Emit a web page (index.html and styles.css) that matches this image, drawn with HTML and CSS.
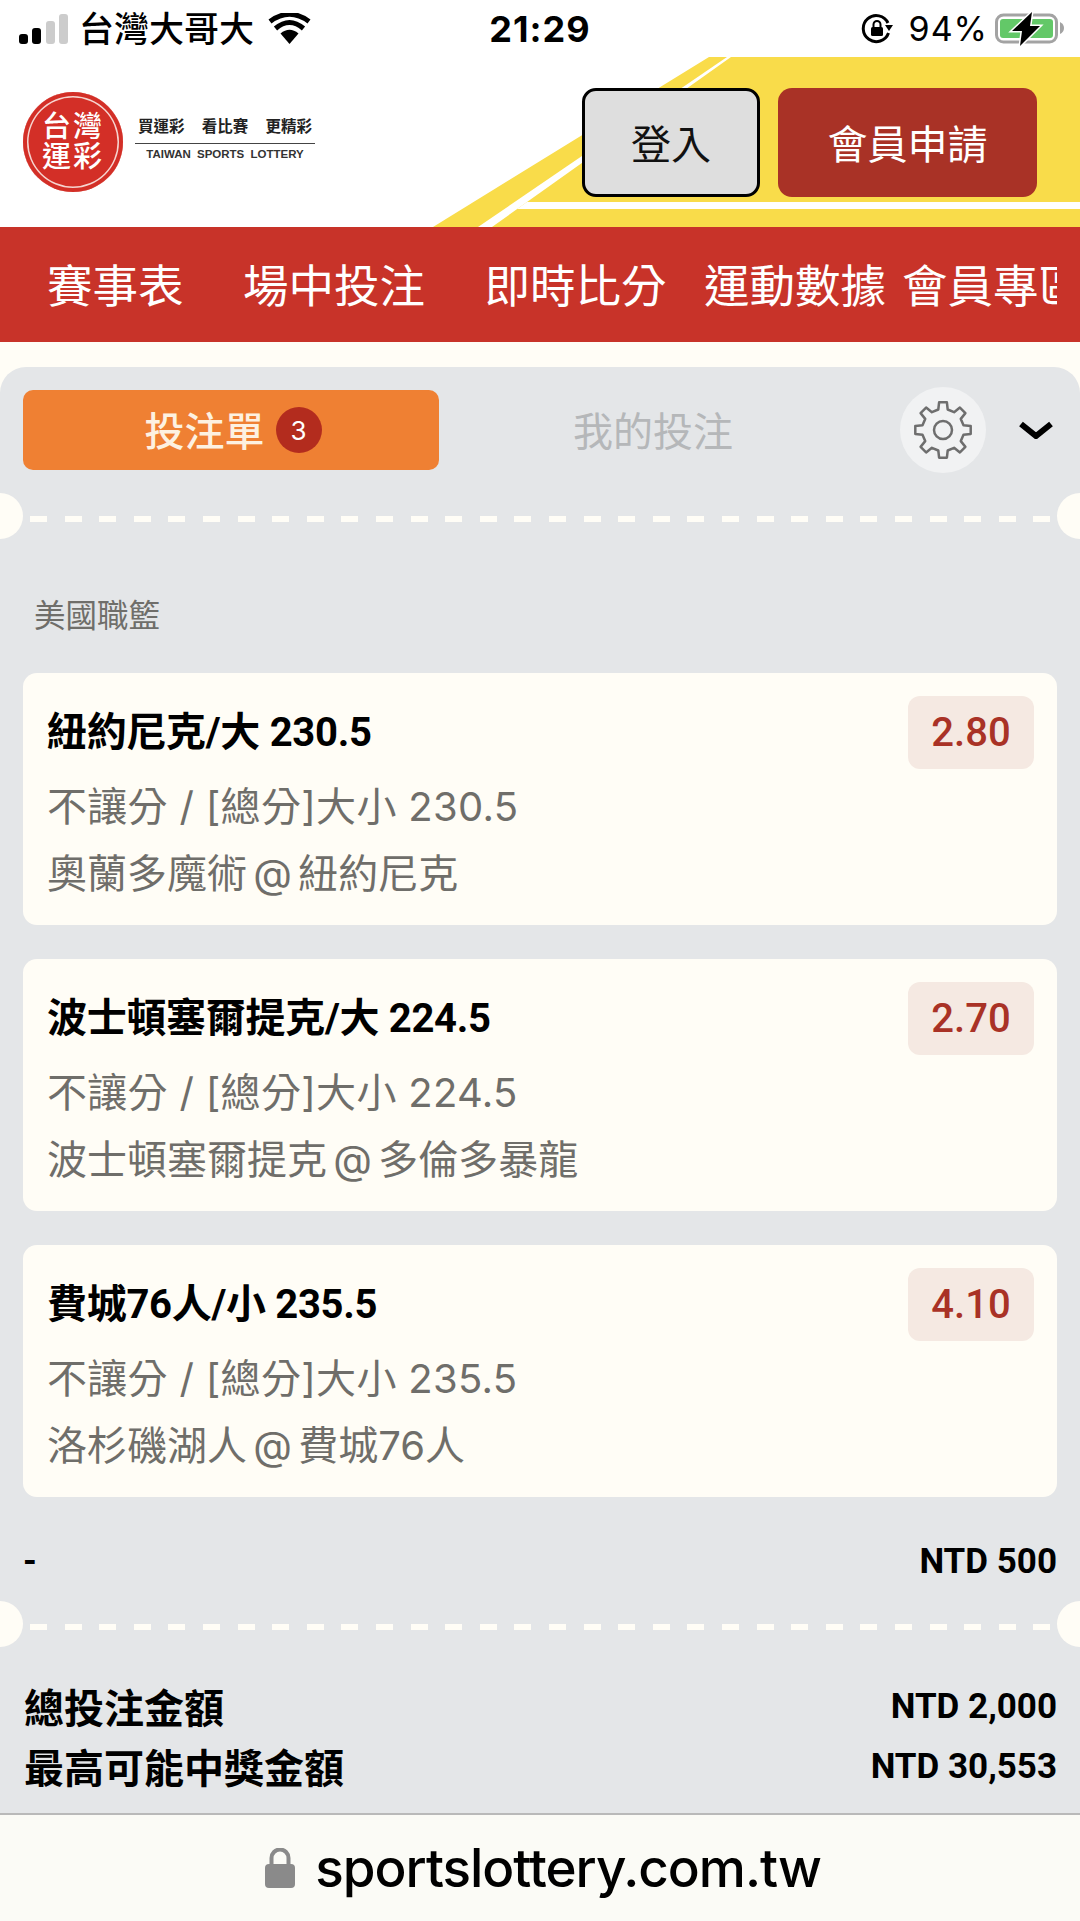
FILE: index.html
```html
<!DOCTYPE html>
<html lang="zh-Hant">
  <head>
    <meta charset="utf-8">
    <title>台灣運彩</title>
    <link rel="stylesheet" href="styles.css">
  </head>

  <body>
    <div class="status-bar">
      <div class="status-left">
        <svg class="signal" width="49" height="30" viewBox="0 0 49 30">
          <rect x="0" y="20" width="9" height="10" rx="3" fill="#000"/>
          <rect x="13" y="14" width="9" height="16" rx="3" fill="#000"/>
          <rect x="27" y="7" width="9" height="23" rx="3" fill="#ccc"/>
          <rect x="40" y="0" width="9" height="30" rx="3" fill="#ccc"/>
        </svg>
        <span class="carrier">台灣大哥大</span>
        <svg class="wifi" width="43" height="31" viewBox="0 0 43 31">
          <path d="M21.5 31 L12.5 20.5 Q21.5 13 30.5 20.5 Z" fill="#000"/>
          <path d="M7.5 15.5 Q21.5 3.5 35.500 15.5" fill="none" stroke="#000" stroke-width="5"/>
          <path d="M2 8.500 Q21.500 -6 41 8.500" fill="none" stroke="#000" stroke-width="5"/>
        </svg>
      </div>
      <div class="status-time">21:29</div>
      <div class="status-right">
        <svg class="rotation-lock" width="32" height="32" viewBox="0 0 32 32">
          <path d="M27.500 20 A13 13 0 1 1 27 10" fill="none" stroke="#000" stroke-width="3"/>
          <path d="M24 12 L32 12 L28 18 Z" fill="#000"/>
          <rect x="10" y="14" width="12" height="9" rx="1.500" fill="#000"/>
          <path d="M12.500 14 V11.500 A3.500 3.500 0 0 1 19.500 11.500 V14" fill="none" stroke="#000" stroke-width="2"/>
        </svg>
        <span class="battery-text">94%</span>
        <svg class="battery" width="70" height="38" viewBox="0 0 70 38">
          <rect x="1.500" y="5" width="60" height="27" rx="7" fill="none" stroke="#a3a3a3" stroke-width="3"/>
          <rect x="5" y="9" width="53" height="19" rx="3" fill="#63c868"/>
          <path d="M65 12 Q69 14 69 18 Q69 22 65 24 Z" fill="#a3a3a3"/>
          <path d="M37 2 L17 21 L27 21 L25 36 L45 16 L35 16 Z" fill="#000" stroke="#fff" stroke-width="3" paint-order="stroke"/>
        </svg>
      </div>
    </div>

    <div class="site-header">
      <svg class="header-stripes" width="1080" height="170" viewBox="0 0 1080 170">
        <polygon points="709,0 1080,0 1080,170 433,170" fill="#f9dc4a"/>
        <polygon points="727,0 731,0 492,170 478,170" fill="#fff"/>
        <polygon points="527,145 1080,145 1080,152 517,152" fill="#fff"/>
      </svg>

      <div class="logo">
        <div class="logo-badge">
          <span>台灣</span>
          <span>運彩</span>
        </div>
        <div class="logo-text">
          <div class="logo-slogan">
            <span>買運彩</span>
            <span>看比賽</span>
            <span>更精彩</span>
          </div>
          <div class="logo-en">TAIWAN SPORTS LOTTERY</div>
        </div>
      </div>

      <div class="header-buttons">
        <a class="btn btn-login">登入</a>
        <a class="btn btn-join">會員申請</a>
      </div>
    </div>

    <div class="main-nav">
      <div class="main-nav-inner">
        <a class="nav-item">賽事表</a>
        <a class="nav-item">場中投注</a>
        <a class="nav-item nav-item-mid">即時比分</a>
        <a class="nav-item nav-item-tight">運動數據</a>
        <a class="nav-item">會員專區</a>
      </div>
    </div>

    <div class="slip">
      <div class="slip-tabs">
        <a class="tab-active">投注單 <span class="tab-badge">3</span></a>
        <a class="tab-other">我的投注</a>
        <div class="gear-button">
          <svg width="60" height="60" viewBox="0 0 60 60">
            <polygon points="25.300,9.500 26.100,2.300 33.900,2.300 34.700,9.500 41.100,12.200 46.900,7.600 52.400,13.100 47.800,18.900 50.500,25.300 57.700,26.100 57.700,33.900 50.500,34.700 47.800,41.100 52.400,46.900 46.900,52.400 41.100,47.800 34.700,50.500 33.900,57.700 26.100,57.700 25.300,50.500 18.900,47.800 13.100,52.400 7.600,46.900 12.200,41.100 9.500,34.700 2.300,33.900 2.300,26.100 9.500,25.300 12.200,18.900 7.600,13.100 13.100,7.600 18.900,12.200" fill="none" stroke="#6e6e6e" stroke-width="2.500" stroke-linejoin="round"/>
            <circle cx="30" cy="30" r="9" fill="none" stroke="#6e6e6e" stroke-width="2.500"/>
          </svg>
        </div>
        <svg class="chevron" width="34" height="18" viewBox="0 0 34 18">
          <path d="M2 3 L17 15 L32 3" fill="none" stroke="#000" stroke-width="6"/>
        </svg>
      </div>

      <div class="divider divider-top"></div>

      <div class="league">美國職籃</div>

      <div class="bets">
        <div class="bet-card">
          <div class="bet-info">
            <div class="bet-title">紐約尼克/大 230.5</div>
            <div class="bet-line bet-market">不讓分 / [總分]大小 230.5</div>
            <div class="bet-line bet-match">奧蘭多魔術 @ 紐約尼克</div>
          </div>
          <div class="bet-odds">2.80</div>
        </div>

        <div class="bet-card">
          <div class="bet-info">
            <div class="bet-title">波士頓塞爾提克/大 224.5</div>
            <div class="bet-line bet-market">不讓分 / [總分]大小 224.5</div>
            <div class="bet-line bet-match">波士頓塞爾提克 @ 多倫多暴龍</div>
          </div>
          <div class="bet-odds">2.70</div>
        </div>

        <div class="bet-card">
          <div class="bet-info">
            <div class="bet-title">費城76人/小 235.5</div>
            <div class="bet-line bet-market">不讓分 / [總分]大小 235.5</div>
            <div class="bet-line bet-match">洛杉磯湖人 @ 費城76人</div>
          </div>
          <div class="bet-odds">4.10</div>
        </div>
      </div>

      <div class="stake-row">
        <span class="total-value">-</span>
        <span class="total-value">NTD 500</span>
      </div>

      <div class="divider divider-bottom"></div>

      <div class="totals">
        <div class="total-row">
          <span class="total-label">總投注金額</span>
          <span class="total-value">NTD 2,000</span>
        </div>
        <div class="total-row">
          <span class="total-label">最高可能中獎金額</span>
          <span class="total-value">NTD 30,553</span>
        </div>
      </div>
    </div>

    <div class="address-bar">
      <svg width="30" height="40" viewBox="0 0 30 40">
        <rect x="0" y="16" width="30" height="24" rx="4" fill="#8a8a8a"/>
        <path d="M6.500 17 V10 A8.500 8.500 0 0 1 23.500 10 V17" fill="none" stroke="#8a8a8a" stroke-width="4"/>
      </svg>
      <span class="address-text">sportslottery.com.tw</span>
    </div>
  </body>
</html>
```

FILE: styles.css
```css
* {
  margin: 0px;
  padding: 0px;
  box-sizing: border-box;
  font-family: Inter, "Noto Sans CJK TC", sans-serif;
}

body {
  width: 1080px;
  height: 1921px;
  overflow: hidden;
  display: flex;
  flex-direction: column;
  background: #fffdf6;
}

/* Status bar */
.status-bar {
  height: 57px;
  flex-shrink: 0;
  display: grid;
  grid-template-columns: 1fr auto 1fr;
  align-items: center;
  padding: 0 19px;
  background: #fff;
  color: #000;
}
.status-left {
  display: flex;
  align-items: center;
}
.carrier {
  margin-left: 11px;
  font-size: 35px;
  line-height: 40px;
  font-weight: 500;
}
.wifi {
  margin-left: 14px;
}
.status-time {
  font-size: 36px;
  font-weight: 700;
  letter-spacing: 1px;
}
.status-right {
  display: flex;
  align-items: center;
  justify-content: flex-end;
  margin-right: -4px;
}
.battery-text {
  margin-left: 16px;
  font-size: 34px;
  font-weight: 400;
  letter-spacing: 1px;
}
.battery {
  margin-left: 7px;
}
/* Status bar */

/* Header */
.site-header {
  height: 170px;
  flex-shrink: 0;
  position: relative;
  display: flex;
  align-items: center;
  justify-content: space-between;
  padding: 0 43px 0 23px;
  background: #fff;
}
.header-stripes {
  position: absolute;
  top: 0px;
  left: 0px;
}
.logo {
  position: relative;
  display: flex;
  align-items: center;
}
.logo-badge {
  width: 100px;
  height: 100px;
  display: flex;
  flex-direction: column;
  align-items: center;
  justify-content: center;
  border-radius: 50%;
  background: #d32f27;
  box-shadow: inset 0 0 0 4px #d32f27, inset 0 0 0 5.500px #f6d4cf;
  color: #fff;
  font-size: 29px;
  line-height: 30px;
  font-weight: 500;
  letter-spacing: 2px;
}
.logo-text {
  width: 180px;
  margin-left: 12px;
  margin-top: -7px;
}
.logo-slogan {
  display: flex;
  justify-content: space-between;
  padding: 0 3px;
  border-bottom: 1.500px solid #444;
  padding-bottom: 5px;
  font-size: 15.500px;
  line-height: 22px;
  font-weight: 700;
  color: #222;
}
.logo-en {
  margin-top: 2px;
  text-align: center;
  font-family: "Liberation Sans", sans-serif;
  font-size: 11.500px;
  line-height: 16px;
  font-weight: 700;
  word-spacing: 3px;
  color: #333;
}
.header-buttons {
  position: relative;
  display: flex;
  gap: 18px;
}
.btn {
  height: 109px;
  display: flex;
  align-items: center;
  justify-content: center;
  border-radius: 14px;
  font-size: 40px;
}
.btn-login {
  width: 178px;
  border: 3px solid #000;
  background: #dedede;
  color: #111;
}
.btn-join {
  width: 259px;
  background: #a93226;
  color: #fff;
}
/* Header */

/* Navigation */
.main-nav {
  height: 115px;
  flex-shrink: 0;
  padding: 0 23px;
  background: #c83329;
}
.main-nav-inner {
  height: 100%;
  display: flex;
  align-items: center;
  overflow: hidden;
  padding-left: 24px;
}
.nav-item {
  flex-shrink: 0;
  margin-right: 59.500px;
  padding-bottom: 3px;
  font-size: 45.500px;
  color: #fff;
  white-space: nowrap;
}
.nav-item-mid {
  margin-right: 37.500px;
}
.nav-item-tight {
  margin-right: 16px;
}
/* Navigation */

/* Bet slip */
.slip {
  flex: 1;
  margin-top: 25px;
  border-radius: 26px 26px 0 0;
  background: #e4e6e8;
}
.slip-tabs {
  display: flex;
  align-items: center;
  height: 80px;
  margin: 23px 27px 0 23px;
}
.tab-active {
  width: 416px;
  height: 80px;
  display: flex;
  align-items: center;
  justify-content: center;
  gap: 11px;
  padding: 0 0 3px 4px;
  border-radius: 10px;
  background: #ef8033;
  color: #fdf1e1;
  font-size: 40px;
  font-weight: 500;
}
.tab-badge {
  width: 46px;
  height: 46px;
  display: flex;
  align-items: center;
  justify-content: center;
  margin-top: 3px;
  border-radius: 50%;
  background: #b32c1e;
  color: #fff;
  font-size: 26px;
  font-weight: 400;
}
.tab-other {
  margin-left: 134px;
  padding-bottom: 3px;
  font-size: 40px;
  color: #b5b7b9;
}
.gear-button {
  width: 86px;
  height: 86px;
  margin-left: auto;
  display: flex;
  align-items: center;
  justify-content: center;
  border-radius: 50%;
  background: #f1f2f3;
}
.chevron {
  margin-left: 33px;
}

.divider {
  position: relative;
  height: 6px;
  margin: 0 30px;
  background: repeating-linear-gradient(90deg, #fffdf6 0px, #fffdf6 17px, transparent 17px, transparent 34.600px);
}
.divider::before, .divider::after {
  content: "";
  position: absolute;
  top: -23px;
  width: 46px;
  height: 46px;
  border-radius: 50%;
  background: #fffdf6;
}
.divider::before { left: -53px; }
.divider::after { right: -53px; }
.divider-top { margin-top: 46px; }
.divider-bottom { margin-top: 43px; }

.league {
  margin: 74px 0 37px 34px;
  font-size: 31.500px;
  line-height: 40px;
  color: #6f6e6a;
}

.bets {
  display: flex;
  flex-direction: column;
  gap: 34px;
  padding: 0 23px;
}
.bet-card {
  height: 252px;
  display: flex;
  justify-content: space-between;
  padding: 23px 23px 0 24px;
  border-radius: 14px;
  background: #fffdf6;
}
.bet-title {
  font-family: Roboto, "Noto Sans CJK TC", sans-serif;
  font-size: 40px;
  line-height: 73px;
  font-weight: 700;
  letter-spacing: -0.300px;
  color: #000;
}
.bet-line {
  font-size: 40px;
  line-height: 67px;
  color: #6f6e6a;
}
.bet-market {
  margin-top: 4px;
  letter-spacing: 0.300px;
}
.bet-match {
  word-spacing: -5px;
}
.bet-odds {
  width: 126px;
  height: 73px;
  display: flex;
  align-items: center;
  justify-content: center;
  border-radius: 12px;
  background: #f5e9e2;
  color: #a93226;
  font-family: Roboto, sans-serif;
  font-size: 40px;
  font-weight: 500;
}

.stake-row {
  height: 40px;
  display: flex;
  align-items: center;
  justify-content: space-between;
  margin-top: 44px;
  padding: 0 23px;
}

.totals {
  margin-top: 46px;
  padding: 0 23px 0 24px;
}
.total-row {
  height: 60px;
  display: flex;
  align-items: center;
  justify-content: space-between;
}
.total-label {
  font-size: 40px;
  font-weight: 700;
  color: #000;
}
.total-value {
  font-family: Roboto, sans-serif;
  font-size: 35px;
  font-weight: 700;
  color: #000;
}
/* Bet slip */

/* Address bar */
.address-bar {
  height: 108px;
  flex-shrink: 0;
  display: flex;
  align-items: center;
  justify-content: center;
  gap: 20px;
  padding-left: 6px;
  border-top: 2px solid #b9b9b9;
  background: #fbfbf6;
}
.address-text {
  font-size: 53px;
  font-weight: 500;
  letter-spacing: -1px;
  color: #000;
}
/* Address bar */
```
